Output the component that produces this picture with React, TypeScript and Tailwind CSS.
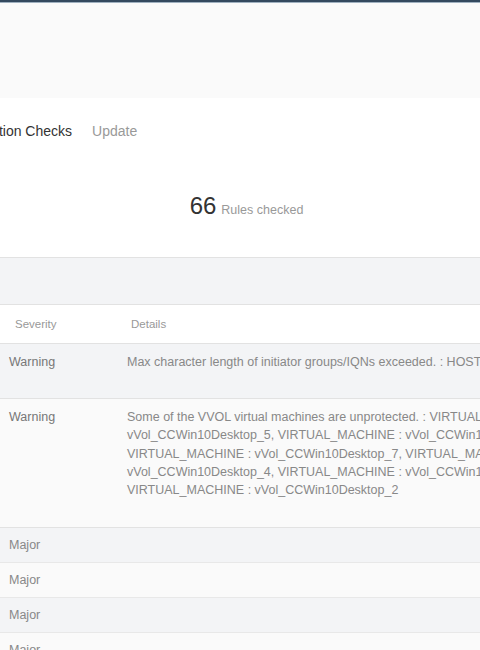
import React from "react";

const font = { fontFamily: '"Liberation Sans", Arial, sans-serif' };

const detailLines = [
  "Some of the VVOL virtual machines are unprotected. : VIRTUAL_MACHINE : vVol_CCWin10Desktop_6,",
  "vVol_CCWin10Desktop_5, VIRTUAL_MACHINE : vVol_CCWin10Desktop_8, VIRTUAL_MACHINE :",
  "VIRTUAL_MACHINE : vVol_CCWin10Desktop_7, VIRTUAL_MACHINE : vVol_CCWin10Desktop_3,",
  "vVol_CCWin10Desktop_4, VIRTUAL_MACHINE : vVol_CCWin10Desktop_1,",
  "VIRTUAL_MACHINE : vVol_CCWin10Desktop_2",
];

export default function App() {
  return (
    <div
      className="w-[480px] h-[650px] overflow-hidden bg-[#fafafa] text-[#555]"
      style={font}
    >
      <div className="h-[2px] bg-[#34495e]" />
      <div className="h-px bg-[#9fb0bf]" />
      <div className="h-[95px] bg-[#fafafa]" />

      {/* tabs + summary */}
      <div className="bg-white">
        <div className="h-[67px] flex items-center gap-5">
          <span className="-ml-[39px] text-[14px] text-[#333] whitespace-nowrap shrink-0">
            Validation Checks
          </span>
          <span className="text-[14px] text-[#999] whitespace-nowrap shrink-0">Update</span>
        </div>
        <div className="h-[92px] flex items-center justify-center">
          <div className="flex items-baseline gap-[5px] -mt-[8px] ml-[13px]">
            <span className="text-[24px] leading-none text-[#333]">66</span>
            <span className="text-[12.5px] text-[#999]">Rules checked</span>
          </div>
        </div>
      </div>

      <div className="h-[48px] bg-[#f3f4f6] border-y border-[#e2e2e2]" />

      {/* table */}
      <div className="whitespace-nowrap">
        <div className="flex h-[39px] items-center bg-white border-b border-[#e2e2e2] text-[11.5px] text-[#999] pt-[2px]">
          <div className="w-[131px] shrink-0 pl-[15px]">Severity</div>
          <div>Details</div>
        </div>

        <div className="flex bg-[#f3f4f6] border-b border-[#e2e2e2] text-[12.5px] text-[#888] leading-[18px] pt-[9px] pb-[27px]">
          <div className="w-[127px] shrink-0 pl-[9px] text-[#777]">Warning</div>
          <div>Max character length of initiator groups/IQNs exceeded. : HOST : host_with_long_name</div>
        </div>

        <div className="flex bg-[#fafafa] border-b border-[#e2e2e2] text-[12.5px] text-[#888] leading-[18.3px] pt-[9px] pb-[28px]">
          <div className="w-[127px] shrink-0 pl-[9px] text-[#777]">Warning</div>
          <div>
            {detailLines.map((l) => (
              <div key={l}>{l}</div>
            ))}
          </div>
        </div>

        {[0, 1, 2, 3].map((i) => (
          <div
            key={i}
            className={
              "flex h-[35px] items-center border-b border-[#e8e8e8] text-[12.5px] text-[#888] " +
              (i % 2 === 0 ? "bg-[#f3f4f6]" : "bg-[#fafafa]")
            }
          >
            <div className="w-[127px] shrink-0 pl-[9px]">Major</div>
          </div>
        ))}
      </div>
    </div>
  );
}
